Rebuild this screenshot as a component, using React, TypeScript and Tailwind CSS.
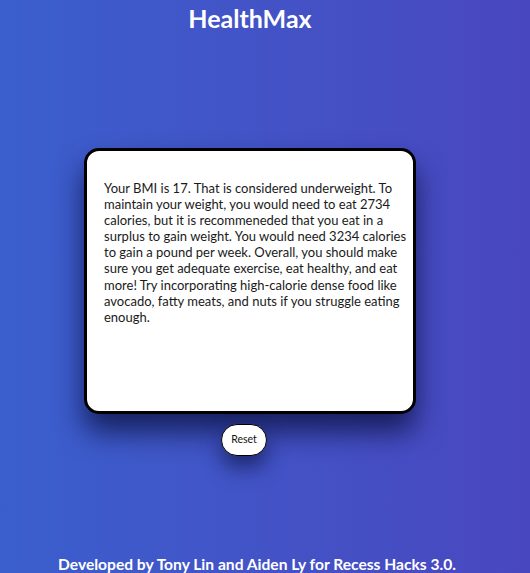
import React from "react";

// the result text keeps the reference's line breaks
const resultLines = [
  "Your BMI is 17. That is considered underweight. To",
  "maintain your weight, you would need to eat 2734",
  "calories, but it is recommeneded that you eat in a",
  "surplus to gain weight. You would need 3234 calories",
  "to gain a pound per week. Overall, you should make",
  "sure you get adequate exercise, eat healthy, and eat",
  "more! Try incorporating high-calorie dense food like",
  "avocado, fatty meats, and nuts if you struggle eating",
  "enough.",
];

const App = () => {
  return (
    <main className="flex h-[573px] w-full flex-col overflow-hidden bg-gradient-to-r from-[#3a5fcd] to-[#4947c0] font-['Lato',sans-serif]">
      <div className="flex w-[500px] flex-col items-center">
        <h1 className="mt-[3px] text-[25px] font-bold leading-[30px] text-white">
          HealthMax
        </h1>

        <section className="mt-[115px] h-[266px] w-[332px] rounded-[15px] border-[3px] border-black bg-white pl-[17px] pt-[29px] shadow-[0_18px_28px_rgba(10,15,60,0.75)]">
          <p className="text-[13px] leading-[16.1px] text-[#1a1a1a]">
            {resultLines.map((line) => (
              <span key={line} className="block whitespace-nowrap">
                {line}
              </span>
            ))}
          </p>
        </section>

        <button className="mt-[10px] mr-[12px] h-[32px] w-[46px] rounded-full border border-black bg-white text-[10.5px] text-[#111] shadow-[0_12px_20px_rgba(10,15,60,0.6)]">
          Reset
        </button>
      </div>

      <footer className="mt-auto mr-[16px] self-center text-[15.6px] font-bold leading-[18px] text-white">
        Developed by Tony Lin and Aiden Ly for Recess Hacks 3.0.
      </footer>
    </main>
  );
};

export default App;
